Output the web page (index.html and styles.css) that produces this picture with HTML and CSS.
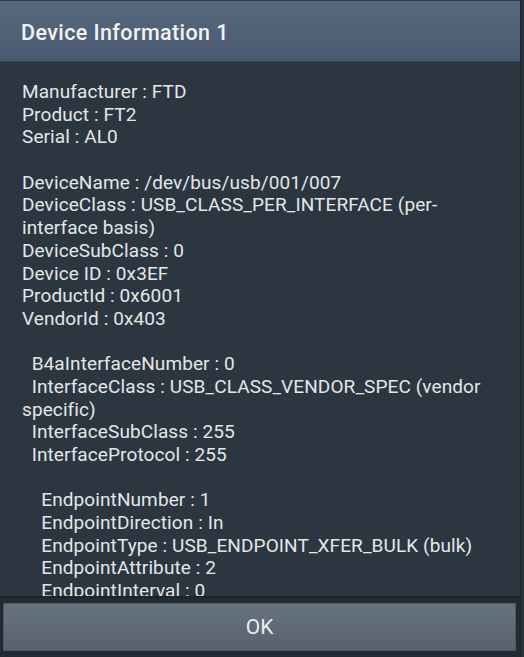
FILE: index.html
```html
<!DOCTYPE html>
<html>
<head>
<meta charset="utf-8">
<link rel="stylesheet" href="styles.css">
</head>
<body>
<div class="dialog">
  <div class="main">
    <div class="title">Device Information 1</div>
    <div class="content">
      <div class="line">Manufacturer : FTD</div>
      <div class="line">Product : FT2</div>
      <div class="line">Serial : AL0</div>
      <div class="line"> </div>
      <div class="line">DeviceName : /dev/bus/usb/001/007</div>
      <div class="line">DeviceClass : USB_CLASS_PER_INTERFACE (per-</div>
      <div class="line">interface basis)</div>
      <div class="line">DeviceSubClass : 0</div>
      <div class="line">Device ID : 0x3EF</div>
      <div class="line">ProductId : 0x6001</div>
      <div class="line">VendorId : 0x403</div>
      <div class="line"> </div>
      <div class="line">  B4aInterfaceNumber : 0</div>
      <div class="line">  InterfaceClass : USB_CLASS_VENDOR_SPEC (vendor</div>
      <div class="line">specific)</div>
      <div class="line">  InterfaceSubClass : 255</div>
      <div class="line">  InterfaceProtocol : 255</div>
      <div class="line"> </div>
      <div class="line">    EndpointNumber : 1</div>
      <div class="line">    EndpointDirection : In</div>
      <div class="line">    EndpointType : USB_ENDPOINT_XFER_BULK (bulk)</div>
      <div class="line">    EndpointAttribute : 2</div>
      <div class="line">    EndpointInterval : 0</div>
    </div>
    <div class="footer">
      <button class="ok">OK</button>
    </div>
  </div>
  <div class="edge"></div>
</div>
</body>
</html>
```
FILE: styles.css
```css
html, body {
  margin: 0;
  padding: 0;
  background: #232a32;
}
body {
  width: 524px;
  height: 657px;
  overflow: hidden;
  font-family: Roboto, "Liberation Sans", sans-serif;
}
.dialog {
  display: flex;
  width: 524px;
  height: 657px;
}
.main {
  width: 520px;
  display: flex;
  flex-direction: column;
}
.edge {
  width: 4px;
  background: #262e37;
  border-left: 1px solid #1f262e;
  box-sizing: border-box;
}
.title {
  height: 57px;
  padding-top: 3px;
  border-top: 1px solid #2f3d4c;
  border-bottom: 1px solid #3a4757;
  background: linear-gradient(#57697f, #4a5b71);
  color: #f2f2f2;
  font-size: 21.5px;
  font-weight: 500;
  letter-spacing: 0.4px;
  line-height: 57px;
  padding-left: 21px;
  box-sizing: content-box;
}
.content {
  height: 534px;
  overflow: hidden;
  background: #2c3641;
  padding: 19px 0 0 22px;
  box-sizing: border-box;
  color: #e4e6e8;
  font-size: 19px;
  letter-spacing: 0.1px;
  line-height: 22.7px;
}
.line {
  white-space: pre;
  height: 22.7px;
}
.footer {
  flex: 1;
  background: #232a32;
  border-top: 2px solid #1d232a;
  padding: 5px 4px 6px 3px;
  display: flex;
}
.ok {
  flex: 1;
  margin: 0;
  border: 1px solid #4e5865;
  background: linear-gradient(#67737f, #57626e);
  color: #eceef0;
  font-family: Roboto, "Liberation Sans", sans-serif;
  font-size: 21px;
  padding: 0;
}
```
